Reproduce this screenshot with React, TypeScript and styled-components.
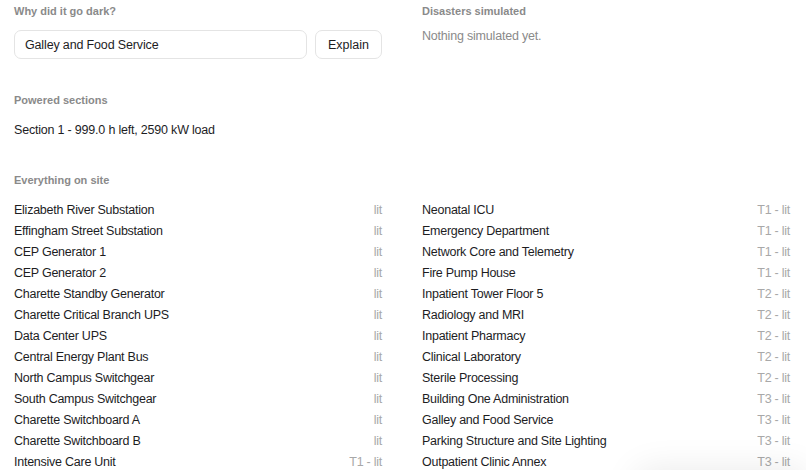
import styled, { createGlobalStyle } from "styled-components";

const GlobalStyle = createGlobalStyle`
  html, body {
    margin: 0;
    padding: 0;
    background: #ffffff;
  }
  body {
    font-family: "Liberation Sans", Arial, sans-serif;
    color: #1d1d1f;
    overflow: hidden;
  }
`;

const Page = styled.div`
  padding: 4px 16px 0 14px;
  display: flex;
  flex-direction: column;
  gap: 32px;
`;

const TopGrid = styled.div`
  display: grid;
  grid-template-columns: 1fr 1fr;
  column-gap: 40px;
`;

const Column = styled.div`
  display: flex;
  flex-direction: column;
  gap: 34px;
`;

const Section = styled.section``;

const Heading = styled.h3<{ $gap?: number }>`
  margin: 0 0 ${({ $gap = 12 }) => $gap}px 0;
  font-size: 11px;
  line-height: 14px;
  font-weight: 700;
  color: #8a8a8a;
`;

const Form = styled.div`
  display: flex;
  gap: 8px;
`;

const Input = styled.input`
  flex: 1;
  min-width: 0;
  height: 29px;
  box-sizing: border-box;
  padding: 0 10px;
  border: 1px solid #e4e4e4;
  border-radius: 7px;
  font-family: inherit;
  font-size: 12.5px;
  letter-spacing: -0.15px;
  color: #1d1d1f;
  background: #fff;
  outline: none;
`;

const Button = styled.button`
  height: 29px;
  padding: 0 12px;
  border: 1px solid #e4e4e4;
  border-radius: 7px;
  background: #fff;
  font-family: inherit;
  font-size: 12.5px;
  font-weight: 500;
  color: #1d1d1f;
`;

const Text = styled.div<{ $muted?: boolean }>`
  font-size: 12.5px;
  line-height: 21px;
  letter-spacing: -0.2px;
  color: ${({ $muted }) => ($muted ? "#8a8a8a" : "#1d1d1f")};
`;

const ListGrid = styled.div`
  display: grid;
  grid-template-columns: 1fr 1fr;
  column-gap: 40px;
`;

const List = styled.ul`
  list-style: none;
  margin: 0;
  padding: 0;
`;

const Row = styled.li`
  display: flex;
  justify-content: space-between;
  font-size: 12.5px;
  line-height: 21px;
  letter-spacing: -0.25px;
`;

const Status = styled.span`
  color: #a8a8a8;
`;

const ToastShadow = styled.div`
  position: fixed;
  right: 0;
  bottom: -60px;
  width: 170px;
  height: 60px;
  border-radius: 12px;
  background: #fff;
  box-shadow: 0 0 36px rgba(0, 0, 0, 0.09);
`;

type Item = { name: string; tier?: string };

const leftItems: Item[] = [
  { name: "Elizabeth River Substation" },
  { name: "Effingham Street Substation" },
  { name: "CEP Generator 1" },
  { name: "CEP Generator 2" },
  { name: "Charette Standby Generator" },
  { name: "Charette Critical Branch UPS" },
  { name: "Data Center UPS" },
  { name: "Central Energy Plant Bus" },
  { name: "North Campus Switchgear" },
  { name: "South Campus Switchgear" },
  { name: "Charette Switchboard A" },
  { name: "Charette Switchboard B" },
  { name: "Intensive Care Unit", tier: "T1" },
];

const rightItems: Item[] = [
  { name: "Neonatal ICU", tier: "T1" },
  { name: "Emergency Department", tier: "T1" },
  { name: "Network Core and Telemetry", tier: "T1" },
  { name: "Fire Pump House", tier: "T1" },
  { name: "Inpatient Tower Floor 5", tier: "T2" },
  { name: "Radiology and MRI", tier: "T2" },
  { name: "Inpatient Pharmacy", tier: "T2" },
  { name: "Clinical Laboratory", tier: "T2" },
  { name: "Sterile Processing", tier: "T2" },
  { name: "Building One Administration", tier: "T3" },
  { name: "Galley and Food Service", tier: "T3" },
  { name: "Parking Structure and Site Lighting", tier: "T3" },
  { name: "Outpatient Clinic Annex", tier: "T3" },
];

const ItemList = ({ items }: { items: Item[] }) => (
  <List>
    {items.map((item) => (
      <Row key={item.name}>
        <span>{item.name}</span>
        <Status>{item.tier ? `${item.tier} - lit` : "lit"}</Status>
      </Row>
    ))}
  </List>
);

export default function App() {
  return (
    <>
      <GlobalStyle />
      <Page>
        <TopGrid>
          <Column>
            <Section>
              <Heading>Why did it go dark?</Heading>
              <Form>
                <Input defaultValue="Galley and Food Service" />
                <Button>Explain</Button>
              </Form>
            </Section>
            <Section>
              <Heading $gap={13}>Powered sections</Heading>
              <Text>Section 1 - 999.0 h left, 2590 kW load</Text>
            </Section>
          </Column>
          <Column>
            <Section>
              <Heading $gap={8}>Disasters simulated</Heading>
              <Text $muted>Nothing simulated yet.</Text>
            </Section>
          </Column>
        </TopGrid>
        <Section>
          <Heading $gap={13}>Everything on site</Heading>
          <ListGrid>
            <ItemList items={leftItems} />
            <ItemList items={rightItems} />
          </ListGrid>
        </Section>
      </Page>
      <ToastShadow />
    </>
  );
}
